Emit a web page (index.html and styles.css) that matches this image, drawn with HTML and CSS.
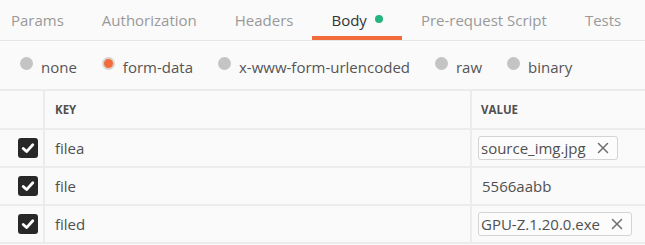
FILE: index.html
```html
<!DOCTYPE html>
<html>
<head>
<meta charset="utf-8">
<link rel="stylesheet" href="styles.css">
</head>
<body>
<div class="tabs">
  <div class="tab first">Params</div>
  <div class="tab">Authorization</div>
  <div class="tab">Headers</div>
  <div class="tab active">Body<span class="dot"></span></div>
  <div class="tab">Pre-request Script</div>
  <div class="tab">Tests</div>
</div>
<div class="modes">
  <label class="mode"><span class="radio"></span>none</label>
  <label class="mode"><span class="radio on"></span>form-data</label>
  <label class="mode"><span class="radio"></span>x-www-form-urlencoded</label>
  <label class="mode"><span class="radio"></span>raw</label>
  <label class="mode"><span class="radio"></span>binary</label>
</div>
<div class="table">
  <div class="row head">
    <div class="cell chk"></div>
    <div class="cell key">KEY</div>
    <div class="cell val">VALUE</div>
  </div>
  <div class="row">
    <div class="cell chk"><span class="box"><svg viewBox="0 0 20 20" width="20" height="20"><path d="M5.2 10.4 L8.6 13.6 L14.8 6.8" fill="none" stroke="#fff" stroke-width="2.8" stroke-linecap="round" stroke-linejoin="round"/></svg></span></div>
    <div class="cell key">filea</div>
    <div class="cell val"><span class="chip">source_img.jpg<svg class="x" viewBox="0 0 12 12" width="12" height="12"><path d="M1.5 1.5 L10.5 10.5 M10.5 1.5 L1.5 10.5" stroke="#6e6e6e" stroke-width="1.5" stroke-linecap="round"/></svg></span></div>
  </div>
  <div class="row">
    <div class="cell chk"><span class="box"><svg viewBox="0 0 20 20" width="20" height="20"><path d="M5.2 10.4 L8.6 13.6 L14.8 6.8" fill="none" stroke="#fff" stroke-width="2.8" stroke-linecap="round" stroke-linejoin="round"/></svg></span></div>
    <div class="cell key">file</div>
    <div class="cell val text">5566aabb</div>
  </div>
  <div class="row">
    <div class="cell chk"><span class="box"><svg viewBox="0 0 20 20" width="20" height="20"><path d="M5.2 10.4 L8.6 13.6 L14.8 6.8" fill="none" stroke="#fff" stroke-width="2.8" stroke-linecap="round" stroke-linejoin="round"/></svg></span></div>
    <div class="cell key">filed</div>
    <div class="cell val"><span class="chip">GPU-Z.1.20.0.exe<svg class="x" viewBox="0 0 12 12" width="12" height="12"><path d="M1.5 1.5 L10.5 10.5 M10.5 1.5 L1.5 10.5" stroke="#6e6e6e" stroke-width="1.5" stroke-linecap="round"/></svg></span></div>
  </div>
</div>
</body>
</html>
```
FILE: styles.css
```css
* { box-sizing: border-box; }
html, body { margin: 0; padding: 0; }
body {
  background: #fafafa;
  font-family: "Open Sans", "Noto Sans", sans-serif;
  font-size: 15px;
  color: #505050;
  width: 645px;
  height: 245px;
  overflow: hidden;
}
.tabs {
  display: flex;
  height: 41px;
  border-bottom: 1px solid #e6e6e6;
}
.tab {
  display: flex;
  align-items: center;
  padding: 0 19px;
  height: 40px;
  color: #999;
  border-bottom: 4px solid transparent;
  padding-top: 4px;
  white-space: nowrap;
}
.tab.first { padding-left: 11px; }
.tab.active {
  color: #333;
  border-bottom-color: #f26b3a;
}
.dot {
  width: 8px;
  height: 8px;
  border-radius: 50%;
  background: #26b47f;
  margin-left: 8px;
  margin-top: -2px;
}
.modes {
  display: flex;
  align-items: center;
  height: 48px;
  padding-left: 20px;
  color: #555;
}
.mode {
  display: flex;
  align-items: center;
  margin-right: 25px;
  padding-top: 3px;
}
.radio {
  width: 13px;
  height: 13px;
  border-radius: 50%;
  background: #c4c4c4;
  margin-right: 8px;
  margin-top: -6px;
}
.radio.on {
  background: #f26b3a;
  border: 2.5px solid #d9d2cf;
}
.table {
  border-top: 2px solid #ececec;
}
.row {
  display: flex;
  height: 38px;
  border-bottom: 2px solid #ececec;
}
.row.head { height: 39px; }
.cell {
  display: flex;
  align-items: center;
  border-right: 2px solid #ececec;
}
.chk {
  width: 45px;
  justify-content: flex-end;
  padding-right: 5px;
}
.key {
  width: 427px;
  padding-left: 10px;
}
.val {
  flex: 1;
  border-right: none;
  padding-left: 6px;
}
.val.text { padding-left: 10px; }
.head .cell {
  font-size: 11.5px;
  font-weight: 700;
  color: #505050;
}
.head .val { padding-left: 9px; }
.box {
  width: 20px;
  height: 20px;
  border-radius: 3px;
  background: #282828;
  display: flex;
}
.chip {
  display: inline-flex;
  align-items: center;
  height: 24px;
  border: 1px solid #d4d4d4;
  border-radius: 3px;
  padding: 0 8px 0 2px;
  background: #fcfcfc;
}
.x { margin-left: 11px; }
```
